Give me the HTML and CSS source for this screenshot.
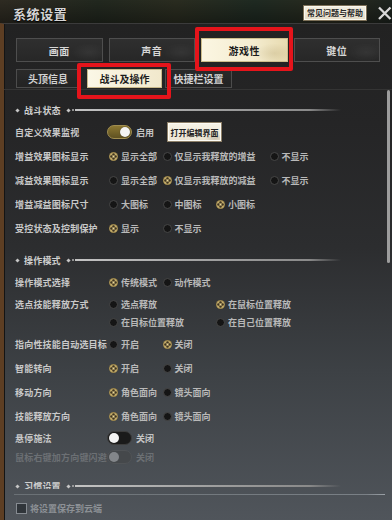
FILE: index.html
```html
<!DOCTYPE html>
<html lang="zh-CN">
<head>
<meta charset="utf-8">
<title>系统设置</title>
<link rel="stylesheet" href="styles.css">
</head>
<body>
<svg class="defs" aria-hidden="true">
  <symbol id="ron" viewBox="0 0 10 10">
    <circle cx="5" cy="5" r="5" fill="#8f7b45"/>
    <circle cx="5" cy="5" r="4.3" fill="#c0a968"/>
    <circle cx="5" cy="2.7" r="1.35" fill="#3e3420"/>
    <circle cx="5" cy="7.3" r="1.35" fill="#3e3420"/>
    <circle cx="2.7" cy="5" r="1.35" fill="#3e3420"/>
    <circle cx="7.3" cy="5" r="1.35" fill="#3e3420"/>
    <circle cx="5" cy="5" r="1" fill="#ead9a0"/>
  </symbol>
</svg>
<div class="frame">
  <header class="titlebar">
    <h1 class="title">系统设置</h1>
    <button class="help">常见问题与帮助</button>
    <svg class="close" viewBox="0 0 15 14"><path d="M2 1.5 L13.5 13 M13.5 1.5 L2 13" stroke="#d8d8d8" stroke-width="2.3" fill="none"/></svg>
  </header>
  <main class="panel">
    <nav class="tabs">
      <div class="tab">画面</div>
      <div class="tab">声音</div>
      <div class="tab active">游戏性</div>
      <div class="tab">键位</div>
    </nav>
    <nav class="subtabs">
      <div class="stab w1">头顶信息</div>
      <div class="stab active w2">战斗及操作</div>
      <div class="stab w3">快捷栏设置</div>
    </nav>
    <div class="scroll">
      <div class="content">
        <div class="sect"><i class="dia"></i><span class="sname">战斗状态</span><i class="dia d2"></i><i class="dot"></i><span class="rule"></span></div>

        <div class="row">
          <span class="lab">自定义效果监视</span>
          <div class="ctrl">
            <span class="toggle on"><span class="knob"></span></span>
            <span class="otext">启用</span>
            <button class="edit">打开编辑界面</button>
          </div>
        </div>
        <div class="row">
          <span class="lab">增益效果图标显示</span>
          <span class="opt"><svg class="ron"><use href="#ron"/></svg>显示全部</span>
          <span class="opt span2"><span class="radio"></span>仅显示我释放的增益</span>
          <span class="opt"><span class="radio"></span>不显示</span>
        </div>
        <div class="row">
          <span class="lab">减益效果图标显示</span>
          <span class="opt"><span class="radio"></span>显示全部</span>
          <span class="opt span2"><svg class="ron"><use href="#ron"/></svg>仅显示我释放的减益</span>
          <span class="opt"><span class="radio"></span>不显示</span>
        </div>
        <div class="row">
          <span class="lab">增益减益图标尺寸</span>
          <span class="opt"><span class="radio"></span>大图标</span>
          <span class="opt"><span class="radio"></span>中图标</span>
          <span class="opt"><svg class="ron"><use href="#ron"/></svg>小图标</span>
        </div>
        <div class="row">
          <span class="lab">受控状态及控制保护</span>
          <span class="opt"><svg class="ron"><use href="#ron"/></svg>显示</span>
          <span class="opt"><span class="radio"></span>不显示</span>
        </div>

        <div class="sect gap"><i class="dia"></i><span class="sname">操作模式</span><i class="dia d2"></i><i class="dot"></i><span class="rule"></span></div>

        <div class="row">
          <span class="lab">操作模式选择</span>
          <span class="opt"><svg class="ron"><use href="#ron"/></svg>传统模式</span>
          <span class="opt"><span class="radio"></span>动作模式</span>
        </div>
        <div class="row multi">
          <span class="lab">选点技能释放方式</span>
          <span class="opt c2"><span class="radio"></span>选点释放</span>
          <span class="opt c4"><svg class="ron"><use href="#ron"/></svg>在鼠标位置释放</span>
          <span class="opt c2"><span class="radio"></span>在目标位置释放</span>
          <span class="opt c4"><span class="radio"></span>在自己位置释放</span>
        </div>
        <div class="row">
          <span class="lab">指向性技能自动选目标</span>
          <span class="opt"><span class="radio"></span>开启</span>
          <span class="opt"><svg class="ron"><use href="#ron"/></svg>关闭</span>
        </div>
        <div class="row">
          <span class="lab">智能转向</span>
          <span class="opt"><svg class="ron"><use href="#ron"/></svg>开启</span>
          <span class="opt"><span class="radio"></span>关闭</span>
        </div>
        <div class="row">
          <span class="lab">移动方向</span>
          <span class="opt"><svg class="ron"><use href="#ron"/></svg>角色面向</span>
          <span class="opt"><span class="radio"></span>镜头面向</span>
        </div>
        <div class="row">
          <span class="lab">技能释放方向</span>
          <span class="opt"><svg class="ron"><use href="#ron"/></svg>角色面向</span>
          <span class="opt"><span class="radio"></span>镜头面向</span>
        </div>
        <div class="row r20">
          <span class="lab">悬停施法</span>
          <div class="ctrl">
            <span class="toggle off"><span class="knob"></span></span>
            <span class="otext">关闭</span>
          </div>
        </div>
        <div class="row r18 disabled">
          <span class="lab">鼠标右键加方向键闪避</span>
          <div class="ctrl">
            <span class="toggle dis"><span class="knob"></span></span>
            <span class="otext">关闭</span>
          </div>
        </div>

        <div class="sect gap"><i class="dia"></i><span class="sname">习惯设置</span><i class="dia d2"></i><i class="dot"></i><span class="rule"></span></div>
      </div>
      <div class="scrollbar"><div class="thumb"></div></div>
    </div>
    <footer class="footer">
      <div class="fline"></div>
      <label class="cloud"><span class="check"></span>将设置保存到云端</label>
    </footer>
  </main>
  <div class="hl hl1"></div>
  <div class="hl hl2"></div>
</div>
</body>
</html>
```
FILE: styles.css
```css
html, body {
  margin: 0;
  padding: 0;
  background: #151515;
}
body {
  font-family: "Noto Sans CJK SC", "Noto Sans", sans-serif;
}
.defs {
  position: absolute;
  width: 0;
  height: 0;
  overflow: hidden;
}
.frame {
  position: relative;
  width: 392px;
  height: 520px;
  overflow: hidden;
  background: #1b1b1b;
}

/* title bar */
.titlebar {
  height: 23px;
  box-sizing: border-box;
  padding-top: 3px;
  padding-left: 13px;
  display: flex;
  align-items: center;
  background:
    linear-gradient(180deg, rgba(0,0,0,0) 0%, rgba(0,0,0,0.35) 100%),
    linear-gradient(90deg, #2e2b22 0%, #22281f 25%, #2a2c20 45%, #1f2a22 65%, #2a2a1e 85%, #1d241f 100%);
}
.title {
  margin: 0;
  font-size: 13px;
  font-weight: 700;
  color: #d4d4d4;
  letter-spacing: 0.6px;
  line-height: 1;
  text-shadow: 0 1px 1px #000;
}
.help {
  margin-left: auto;
  width: 64px;
  height: 16px;
  box-sizing: border-box;
  padding: 0;
  border: 1px solid #7d7058;
  background: linear-gradient(180deg, #f4efe2, #e4dcc8);
  box-shadow: inset 0 0 0 1px #fbf8ee;
  color: #2a2a2a;
  font-family: inherit;
  font-size: 8px;
  font-weight: 700;
  line-height: 14px;
  white-space: nowrap;
}
.close {
  width: 15px;
  height: 14px;
  margin-left: 10px;
}

/* panel */
.panel {
  height: 497px;
  box-sizing: border-box;
  border-left: 4px solid #5d3e23;
  border-top: 1px solid #3b3b3b;
  box-shadow: inset 1px 0 0 #141414;
  display: flex;
  flex-direction: column;
  background: linear-gradient(180deg, #222222 0%, #252526 20%, #2c2d2f 45%, #3d4145 70%, #50555b 100%);
}
.tabs {
  display: grid;
  grid-template-columns: repeat(4, 1fr);
  column-gap: 6px;
  margin: 14px 12px 0 12px;
  height: 24px;
}
.tab {
  box-sizing: border-box;
  border: 1px solid #4e4e4e;
  background:
    radial-gradient(ellipse 18px 9px at 85% 60%, rgba(255,255,255,0.05), rgba(255,255,255,0) 100%),
    linear-gradient(180deg, #2f2f2f, #272727);
  color: #d6d6d6;
  font-size: 10px;
  font-weight: 700;
  display: flex;
  align-items: center;
  justify-content: center;
  letter-spacing: 0.5px;
}
.tab.active {
  border-color: #cdbd8c;
  background:
    radial-gradient(ellipse 20px 10px at 85% 65%, rgba(170,150,100,0.25), rgba(170,150,100,0) 100%),
    linear-gradient(90deg, #fbf6e2 0%, #f4ecd0 60%, #e8dbb0 100%);
  color: #1c1c1c;
}
.subtabs {
  display: flex;
  margin: 7px 0 1px 12px;
  height: 19px;
}
.stab {
  box-sizing: border-box;
  border: 1px solid #4c4c4c;
  background: linear-gradient(180deg, #2a2a2a, #232323);
  color: #d2d2d2;
  font-size: 10px;
  font-weight: 700;
  display: flex;
  align-items: center;
  justify-content: center;
}
.stab.w1 { width: 64px; }
.stab.w2 { width: 75px; margin-left: 7px; }
.stab.w3 { width: 67px; margin-left: 3px; }
.stab.active {
  border-color: #c9b98a;
  background: linear-gradient(90deg, #fbf7e6, #f1e8cc);
  color: #1c1c1c;
}

/* scrolling content */
.scroll {
  height: 400px;
  box-sizing: border-box;
  border-top: 1px solid #343434;
  display: flex;
  overflow: hidden;
}
.content {
  flex: 1;
  padding: 10px 0 0 11px;
}
.scrollbar {
  width: 3px;
  margin-right: 2px;
}
.thumb {
  height: 173px;
  border-radius: 2px;
  background: #9d9d9d;
}

.sect {
  height: 20px;
  display: flex;
  align-items: center;
}
.sect.gap { margin-top: 10px; }
.dia {
  width: 3px;
  height: 3px;
  background: #c6c6c6;
  transform: rotate(45deg);
  margin-left: 1px;
}
.dia.d2 { margin-left: 6px; }
.dot {
  width: 2px;
  height: 2px;
  border-radius: 50%;
  background: #b0b0b0;
  margin-left: 2px;
}
.sname {
  margin-left: 5px;
  font-size: 9px;
  font-weight: 700;
  color: #cfcfcf;
  letter-spacing: 0.2px;
}
.rule {
  width: 266px;
  height: 2px;
  margin-left: 1px;
  background: linear-gradient(90deg, #c4c4c4 0%, #a0a0a0 50%, #8a8a8a 88%, rgba(138,138,138,0) 100%);
}

.row {
  display: grid;
  grid-template-columns: 94px repeat(4, 53.5px);
  align-items: center;
  height: 24px;
}
.row.multi {
  height: auto;
  grid-auto-rows: 18px;
  padding: 1px 0;
}
.row.r20 { height: 20px; }
.row.r18 { height: 18px; }
.lab {
  font-size: 9px;
  font-weight: 700;
  color: #c9c9c9;
  white-space: nowrap;
  letter-spacing: 0.2px;
}
.opt {
  display: flex;
  align-items: center;
  gap: 3px;
  font-size: 9px;
  font-weight: 700;
  color: #b9b9b9;
  white-space: nowrap;
}
.span2 { grid-column: span 2; }
.c2 { grid-column: 2 / span 2; }
.c4 { grid-column: 4 / span 2; }
.radio {
  flex: none;
  width: 9px;
  height: 9px;
  box-sizing: border-box;
  border-radius: 50%;
  background: #151515;
  border: 1px solid #474747;
}
.ron {
  flex: none;
  width: 9px;
  height: 9px;
}

.ctrl {
  grid-column: 2 / span 4;
  display: flex;
  align-items: center;
  margin-left: -2px;
}
.toggle {
  flex: none;
  width: 25px;
  height: 14px;
  box-sizing: border-box;
  border-radius: 7px;
  padding: 0 1px;
  display: flex;
  align-items: center;
}
.knob {
  width: 10px;
  height: 10px;
  border-radius: 50%;
  background: #f3f3f3;
}
.toggle.on {
  justify-content: flex-end;
  background: linear-gradient(180deg, #8b7732, #5f5121);
  border: 1px solid #a08d50;
}
.toggle.on .knob {
  box-shadow: 0 0 1px rgba(0,0,0,0.6);
}
.toggle.off {
  justify-content: flex-start;
  background: #1a1a1a;
  border: 1px solid #3d3d3d;
}
.toggle.dis {
  justify-content: flex-start;
  background: #45484b;
  border: 1px solid #505356;
}
.toggle.dis .knob { background: #83868a; }
.otext {
  margin-left: 4px;
  font-size: 9px;
  font-weight: 700;
  color: #c4c4c4;
}
.disabled .lab,
.disabled .otext { color: #6c7074; }
.edit {
  margin-left: 13px;
  width: 55px;
  height: 20px;
  box-sizing: border-box;
  padding: 0;
  border: 1px solid #8e8068;
  background:
    radial-gradient(ellipse 10px 5px at 88% 85%, rgba(140,130,110,0.35), rgba(140,130,110,0) 100%),
    linear-gradient(180deg, #f7f3e7, #ebe4d1);
  box-shadow: inset 0 0 0 1px #fdfbf4;
  color: #222;
  font-family: inherit;
  font-size: 8px;
  font-weight: 700;
  white-space: nowrap;
}

/* footer */
.footer {
  height: 31px;
  box-sizing: border-box;
  padding-top: 5px;
}
.fline {
  height: 1px;
  margin: 0 7px 0 10px;
  background: linear-gradient(90deg, #6a7075, #7a8086 95%, #9aa0a6);
}
.cloud {
  display: flex;
  align-items: center;
  height: 26px;
  margin-left: 12px;
  font-size: 9px;
  font-weight: 700;
  color: #8d9196;
}
.check {
  width: 11px;
  height: 11px;
  box-sizing: border-box;
  border: 1px solid #868b91;
  background: #30353a;
  margin-right: 3px;
}

/* red highlight overlays */
.hl {
  position: absolute;
  box-sizing: border-box;
  border: 4px solid #e5141b;
  border-radius: 2px;
}
.hl1 { left: 195px; top: 27px; width: 98px; height: 44px; }
.hl2 { left: 77px; top: 63px; width: 94px; height: 36px; }
```
